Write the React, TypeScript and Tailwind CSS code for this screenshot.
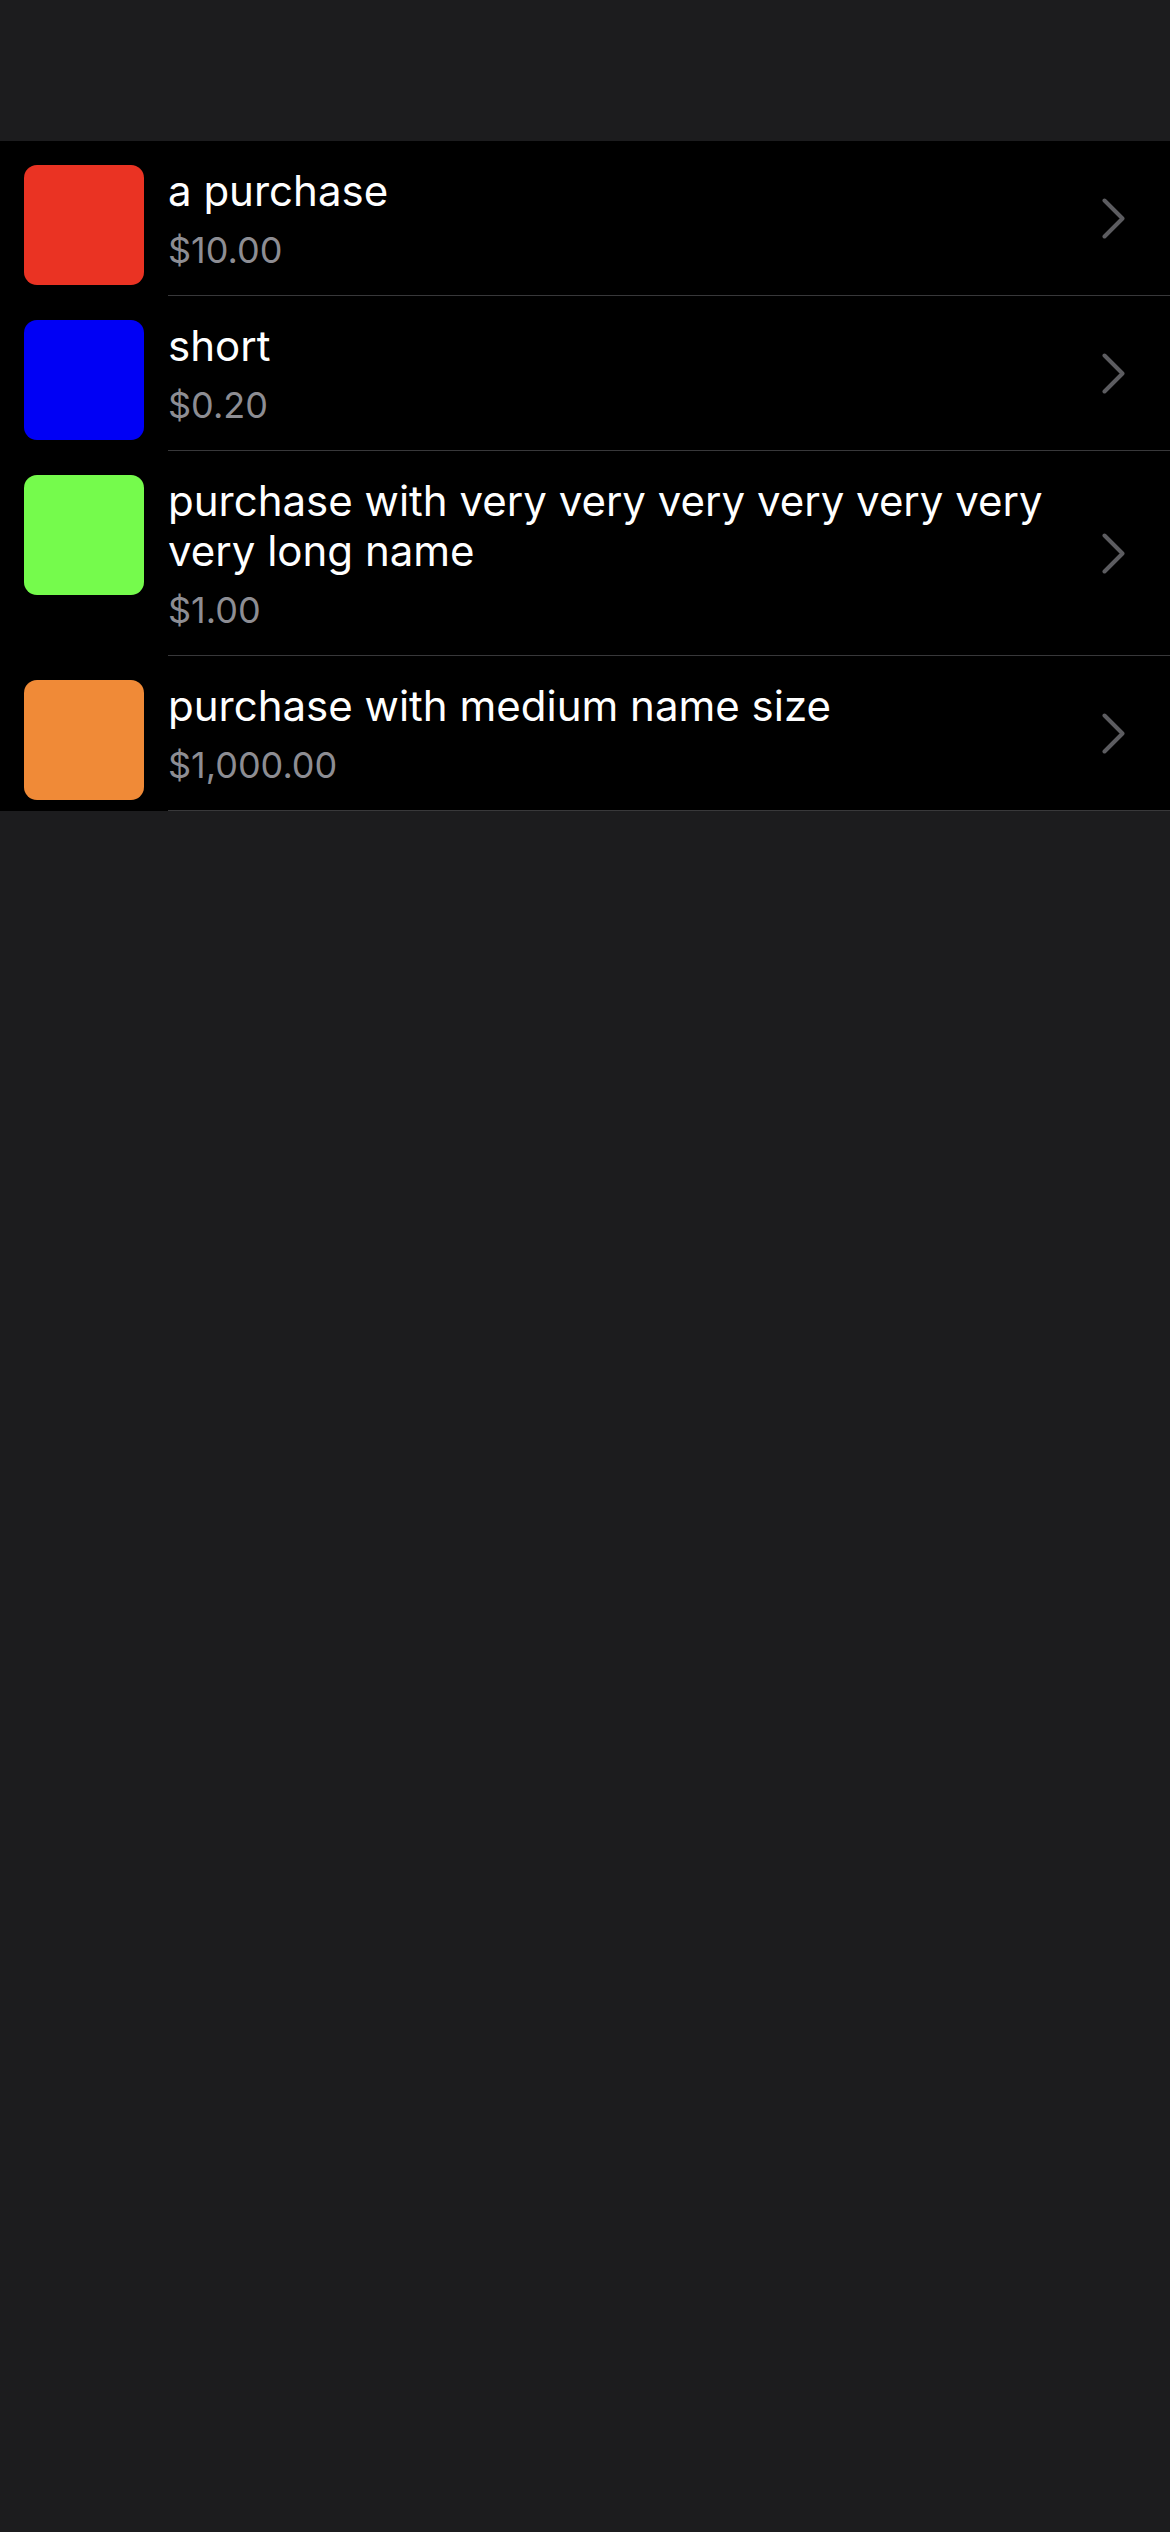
const purchases = [
  { name: "a purchase", price: "$10.00", color: "bg-[#ea3323]" },
  { name: "short", price: "$0.20", color: "bg-[#0000f5]" },
  {
    name: "purchase with very very very very very very very long name",
    price: "$1.00",
    color: "bg-[#75fb4c]",
  },
  { name: "purchase with medium name size", price: "$1,000.00", color: "bg-[#f08a37]" },
];

const Chevron = () => (
  <svg width="23" height="41" viewBox="0 0 23 41" fill="none" className="shrink-0">
    <path
      d="M2.5 2.5 L20.5 20.5 L2.5 38.5"
      stroke="#5c5c60"
      strokeWidth="4"
      strokeLinecap="round"
      strokeLinejoin="round"
    />
  </svg>
);

const App = () => {
  return (
    <div className="min-h-screen bg-[#1c1c1e] font-['Inter','Noto_Sans',sans-serif]">
      <div className="h-[141px]" />
      <ul className="bg-black">
        {purchases.map((p, i) => (
          <li key={i} className="flex items-start pl-[24px]">
            <div className={`w-[120px] h-[120px] mt-[24px] rounded-[13px] shrink-0 ${p.color}`} />
            <div className="flex flex-1 items-center ml-[24px] border-b border-[#38383a]">
              <div className="flex-1 pt-[25px] pb-[23px] pr-[20px]">
                <div className="text-[42px] leading-[50px] text-white">{p.name}</div>
                <div className="mt-[12px] text-[36px] leading-[44px] text-[#8d8d93]">{p.price}</div>
              </div>
              <div className="mr-[45px]">
                <Chevron />
              </div>
            </div>
          </li>
        ))}
      </ul>
    </div>
  );
};

export default App;
